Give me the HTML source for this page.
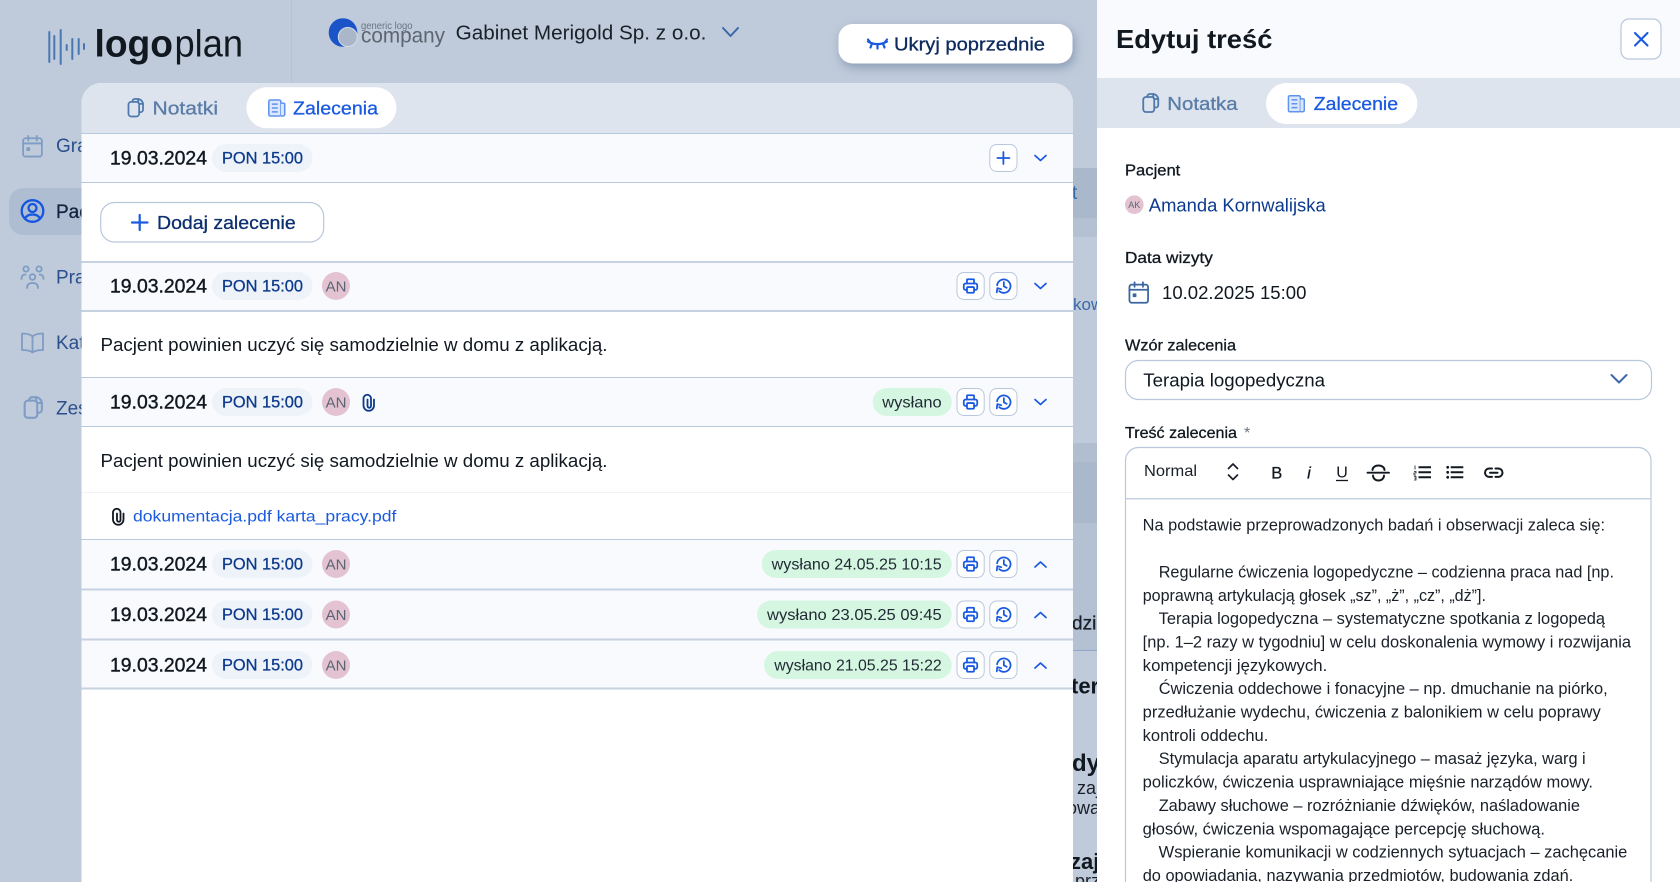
<!DOCTYPE html>
<html lang="pl"><head><meta charset="utf-8"><title>Edytuj treść</title>
<style>
html,body{margin:0;padding:0;width:1680px;height:882px;overflow:hidden;background:#bfcbda}
svg{display:block;font-family:"Liberation Sans",sans-serif}
.m{stroke-width:.3px;stroke:currentColor}
.d{stroke-width:.4px;stroke:#111820}
.ic{fill:none;stroke-linecap:round;stroke-linejoin:round}
</style></head><body>
<svg xmlns="http://www.w3.org/2000/svg" width="1680" height="882" viewBox="0 0 1680 882">
<defs>
<symbol id="copies" viewBox="0 0 17 20"><g class="ic" stroke="currentColor" stroke-width="1.800"><path d="M5 4V3.500A2.500 2.500 0 0 1 7.500 1H10.500c3 0 5.500 2.500 5.500 5.500V12a2.500 2.500 0 0 1-2.500 2.500H12"/><path d="M11 1v2.500A2.500 2.500 0 0 0 13.500 6H16"/><rect x="1" y="4" width="11" height="15" rx="2.800"/></g></symbol>
<symbol id="news" viewBox="0 0 18 18"><rect x=".8" y=".8" width="12.400" height="16.400" rx="1.500" fill="#dbe7fb" stroke="#5f93ec" stroke-width="1.600"/><path d="M13.200 4h2.800a1.200 1.200 0 0 1 1.200 1.200v10.300a1.700 1.700 0 0 1-1.700 1.700h-2.300" fill="#dbe7fb" stroke="#5f93ec" stroke-width="1.600"/><path d="M4 5h6M4 9h6M4 13h6" stroke="#5f93ec" stroke-width="1.600" fill="none"/></symbol>
<symbol id="print" viewBox="0 0 24 24"><g class="ic" stroke="#1a5ae0" stroke-width="2.500"><path d="M7 8.500V3.500a1 1 0 0 1 1-1h8a1 1 0 0 1 1 1v5"/><path d="M7 17.500H5a2.500 2.500 0 0 1-2.500-2.500v-4A2.500 2.500 0 0 1 5 8.500h14a2.500 2.500 0 0 1 2.500 2.500v4a2.500 2.500 0 0 1-2.500 2.500h-2"/><rect x="7" y="13.500" width="10" height="8" rx="1.500"/></g></symbol>
<symbol id="hist" viewBox="0 0 24 24"><g class="ic" stroke="#1a5ae0" stroke-width="2.500"><path d="M3 11a9.500 9.500 0 1 1 3 8.200"/><path d="M2.500 21l.8-6 5.500 1.500"/><path d="M12.500 6.500v6l4 2"/></g></symbol>
<symbol id="cal" viewBox="0 0 22 24"><g class="ic" stroke="currentColor" stroke-width="1.900"><rect x="1" y="3.500" width="20" height="19.500" rx="2.500"/><path d="M1 9h20M6.500 1v5M15.500 1v5"/></g><rect x="4.500" y="13" width="4" height="4" rx=".8" fill="currentColor"/></symbol>
</defs>

<rect width="1680" height="882" fill="#bfcbda"/>
<path d="M291.500 0V83" stroke="#b5c3d5" stroke-width="1"/>

<!-- logo -->
<g stroke="#4878b4" stroke-width="2" stroke-linecap="round"><path d="M49.300 32V62M54.300 36V59M60.700 30V64M66.700 45V50M72.300 39V59M78.700 39V54M84 44V49"/></g>
<text x="94.500" y="56.500" font-size="38" font-weight="700" fill="#111820" textLength="78.500" lengthAdjust="spacingAndGlyphs">logo</text>
<text x="174.500" y="56.500" font-size="38" fill="#111820" textLength="68.500" lengthAdjust="spacingAndGlyphs">plan</text>

<!-- company -->
<circle cx="343" cy="32.500" r="14.300" fill="#1a54c8"/>
<circle cx="347.800" cy="37" r="9.500" fill="#a9b7c8" stroke="#d5dde8" stroke-width="1"/>
<text x="361" y="29" font-size="10.500" fill="#6b7480" textLength="51.500" lengthAdjust="spacingAndGlyphs">generic logo</text>
<text x="361" y="42.500" font-size="21" fill="#5c6570" textLength="84" lengthAdjust="spacingAndGlyphs">company</text>
<text x="455.700" y="39.500" font-size="20.500" fill="#1a2029" textLength="250.700" lengthAdjust="spacingAndGlyphs">Gabinet Merigold Sp. z o.o.</text>
<path d="M723 28l7.500 8 7.500-8" class="ic" stroke="#3a68a8" stroke-width="2"/>

<!-- Ukryj -->
<rect x="838.500" y="24" width="234" height="39.500" rx="14" fill="#fff" style="filter:drop-shadow(2px 4px 5px rgba(95,115,150,.55))"/>
<g class="ic" stroke="#1a5ae0" stroke-width="2.200"><path d="M868 41.500c6 3.500 13 3.500 19 0M868 39.500l2 2.500M887 39.500l-2 2.500M872 43.500l-1.500 4M877.500 44.500v4M883 43.500l1.500 4"/></g>
<text x="894" y="50.500" font-size="18.500" class="m" fill="#0c2a5e" color="#0c2a5e" textLength="151" lengthAdjust="spacingAndGlyphs">Ukryj poprzednie</text>

<!-- sidebar -->
<rect x="9" y="188" width="90" height="47" rx="14" fill="#aebdd1"/>
<use href="#cal" x="22" y="135" width="21" height="22.500" color="#7f9cc4"/>
<text x="56" y="152" font-size="19" fill="#2a4f8c">Grafik</text>
<g class="ic" stroke="#1456e0" stroke-width="2.300"><circle cx="32.500" cy="211" r="10.800"/><circle cx="32.500" cy="208" r="4"/><path d="M25 218.500c1.500-3 4-4 7.500-4s6 1 7.500 4"/></g>
<text x="56" y="218" font-size="19" class="m" fill="#14233f" color="#14233f">Pacjenci</text>
<g class="ic" stroke="#7f9cc4" stroke-width="1.800"><circle cx="26" cy="269" r="2.600"/><circle cx="39" cy="269" r="2.600"/><circle cx="32.500" cy="277" r="2.800"/><path d="M21.500 279c0-3 1.500-4.500 4-4.500M43.500 279c0-3-1.500-4.500-4-4.500M27 288c0-3.500 2-5 5.500-5s5.500 1.500 5.500 5"/></g>
<text x="56" y="283.500" font-size="19" fill="#2a4f8c">Pracownicy</text>
<g class="ic" stroke="#7f9cc4" stroke-width="1.800"><path d="M32.500 336.500c-2.500-2.500-6-3-10.500-3V350c4.500 0 8 .5 10.500 2.500 2.500-2 6-2.500 10.500-2.500v-16.500c-4.500 0-8 .5-10.500 3zM32.500 336.500v16"/></g>
<text x="56" y="349" font-size="19" fill="#2a4f8c">Katalog</text>
<use href="#copies" x="23.500" y="396" width="19.500" height="23" color="#7f9cc4"/>
<text x="56" y="414.500" font-size="19" fill="#2a4f8c">Zestawy</text>

<!-- background content seen in gutter -->
<rect x="1060" y="168" width="40" height="50" fill="#a9b8ca"/>
<rect x="1060" y="218" width="40" height="19" fill="#b4c1d2"/>
<text x="1072" y="199" font-size="19" fill="#3a68a8">t</text>
<text x="1073" y="310" font-size="17" fill="#3a68a8">kow</text>
<rect x="1060" y="443" width="40" height="19" fill="#b1bed0"/>
<rect x="1060" y="462" width="40" height="61" fill="#a9b8ca"/>
<rect x="1060" y="523" width="40" height="127" fill="#b4c1d2"/>
<path d="M1060 650.500H1100" stroke="#8fa8cb" stroke-width="1"/>
<text x="1072" y="629.500" font-size="19" class="m" fill="#1a2029" color="#1a2029">dzi</text>
<text x="1071" y="693.500" font-size="22" font-weight="700" fill="#111820">ter</text>
<text x="1072" y="771" font-size="24" font-weight="700" fill="#111820">dy</text>
<text x="1077" y="794" font-size="18" fill="#1a2029">zaj</text>
<text x="1067" y="814" font-size="18" fill="#1a2029">owa</text>
<text x="1070" y="869" font-size="22" font-weight="700" fill="#111820">zaj</text>
<text x="1075" y="887" font-size="18" fill="#1a2029">prz</text>

<!-- main panel -->
<path d="M81.500 882V103a20 20 0 0 1 20-20H1053a20 20 0 0 1 20 20V882z" fill="#fff"/>
<path d="M81.500 134V103a20 20 0 0 1 20-20H1053a20 20 0 0 1 20 20V134z" fill="#dde4ed"/>
<!-- tabs -->
<use href="#copies" x="127.500" y="98" width="16.500" height="19.500" color="#4f78ad"/>
<text x="152.500" y="114.500" font-size="18" class="m" fill="#5a7ca8" color="#5a7ca8" textLength="65.500" lengthAdjust="spacingAndGlyphs">Notatki</text>
<rect x="246.400" y="87.300" width="150" height="41" rx="20.500" fill="#fff"/>
<use href="#news" x="268" y="99" width="17.500" height="18"/>
<text x="293" y="114.500" font-size="18" class="m" fill="#1a5ae0" color="#1a5ae0" textLength="85" lengthAdjust="spacingAndGlyphs">Zalecenia</text>

<!-- row header backgrounds -->
<g fill="#f9fafd">
<rect x="81.500" y="134" width="991.500" height="48"/>
<rect x="81.500" y="262" width="991.500" height="49"/>
<rect x="81.500" y="378" width="991.500" height="48"/>
<rect x="81.500" y="540" width="991.500" height="49"/>
<rect x="81.500" y="590" width="991.500" height="49"/>
<rect x="81.500" y="640" width="991.500" height="48"/>
</g>
<g stroke="#b8c8dd" stroke-width="1"><path d="M81.500 133.500H1073M81.500 182.500H1073M81.500 377.500H1073M81.500 426.500H1073M81.500 539.500H1073"/></g>
<g stroke="#c6d2e2" stroke-width="2"><path d="M81.500 262H1073M81.500 311H1073M81.500 589.500H1073M81.500 639.500H1073M81.500 688.500H1073"/></g>
<path d="M81.500 492.500H1073" stroke="#f0f3f7" stroke-width="1"/>

<!-- row 1 -->
<text x="110" y="164.500" font-size="19.500" class="d" fill="#111820" textLength="97" lengthAdjust="spacingAndGlyphs">19.03.2024</text>
<rect x="212" y="144" width="100.500" height="28" rx="14" fill="#eef3fa"/>
<text x="222" y="163.500" font-size="16.500" class="m" fill="#0d3a8c" color="#0d3a8c" textLength="81" lengthAdjust="spacingAndGlyphs">PON 15:00</text>
<rect x="989.800" y="144.500" width="27.200" height="27" rx="7" fill="#fff" stroke="#b9c7dc"/>
<path d="M1003.400 152v12M997.400 158h12" class="ic" stroke="#1a5ae0" stroke-width="1.800"/>
<path d="M1035 155.500l5.500 5 5.500-5" class="ic" stroke="#1a5ae0" stroke-width="1.700"/>

<!-- add button -->
<rect x="100.700" y="202.500" width="223" height="39.500" rx="14" fill="#fff" stroke="#b9c7dc" stroke-width="1.200"/>
<path d="M139.700 215v15M132 222.500h15.500" class="ic" stroke="#1a5ae0" stroke-width="2.200"/>
<text x="157" y="229" font-size="18.500" class="m" fill="#0c2f6e" color="#0c2f6e" textLength="138.700" lengthAdjust="spacingAndGlyphs">Dodaj zalecenie</text>

<!-- row 2 -->
<text x="110" y="292.500" font-size="19.500" class="d" fill="#111820" textLength="97" lengthAdjust="spacingAndGlyphs">19.03.2024</text>
<rect x="212" y="272" width="100.500" height="28" rx="14" fill="#eef3fa"/>
<text x="222" y="291.500" font-size="16.500" class="m" fill="#0d3a8c" color="#0d3a8c" textLength="81" lengthAdjust="spacingAndGlyphs">PON 15:00</text>
<circle cx="336" cy="286" r="14" fill="#e3c3d1"/><text x="336" y="291.500" font-size="15" fill="#5b6472" text-anchor="middle">AN</text>
<rect x="957" y="272.500" width="27.200" height="27" rx="7" fill="#fff" stroke="#b9c7dc"/><use href="#print" x="962" y="277.500" width="17" height="17"/>
<rect x="989.800" y="272.500" width="27.200" height="27" rx="7" fill="#fff" stroke="#b9c7dc"/><use href="#hist" x="995" y="277.500" width="17" height="17"/>
<path d="M1035 283.500l5.500 5 5.500-5" class="ic" stroke="#1a5ae0" stroke-width="1.700"/>
<text x="100.500" y="351" font-size="18" fill="#111820" textLength="507" lengthAdjust="spacingAndGlyphs">Pacjent powinien uczyć się samodzielnie w domu z aplikacją.</text>

<!-- row 3 -->
<text x="110" y="408.500" font-size="19.500" class="d" fill="#111820" textLength="97" lengthAdjust="spacingAndGlyphs">19.03.2024</text>
<rect x="212" y="388" width="100.500" height="28" rx="14" fill="#eef3fa"/>
<text x="222" y="407.500" font-size="16.500" class="m" fill="#0d3a8c" color="#0d3a8c" textLength="81" lengthAdjust="spacingAndGlyphs">PON 15:00</text>
<circle cx="336" cy="402" r="14" fill="#e3c3d1"/><text x="336" y="407.500" font-size="15" fill="#5b6472" text-anchor="middle">AN</text>
<path d="M367.500 399.500v6.500a1.750 1.750 0 0 0 3.500 0V398.500a3.750 3.750 0 0 0-7.500 0v7a5.250 5.250 0 0 0 10.500 0v-6" class="ic" stroke="#0c3a8c" stroke-width="1.800"/>
<rect x="872.700" y="388" width="79" height="28" rx="14" fill="#d5f7e1"/>
<text x="882.300" y="407.500" font-size="16" fill="#222a35" textLength="59.400" lengthAdjust="spacingAndGlyphs">wysłano</text>
<rect x="957" y="388.500" width="27.200" height="27" rx="7" fill="#fff" stroke="#b9c7dc"/><use href="#print" x="962" y="393.500" width="17" height="17"/>
<rect x="989.800" y="388.500" width="27.200" height="27" rx="7" fill="#fff" stroke="#b9c7dc"/><use href="#hist" x="995" y="393.500" width="17" height="17"/>
<path d="M1035 399.500l5.500 5 5.500-5" class="ic" stroke="#1a5ae0" stroke-width="1.700"/>
<text x="100.500" y="467" font-size="18" fill="#111820" textLength="507" lengthAdjust="spacingAndGlyphs">Pacjent powinien uczyć się samodzielnie w domu z aplikacją.</text>
<path d="M117 513.500v6.500a1.750 1.750 0 0 0 3.500 0V512.500a3.750 3.750 0 0 0-7.500 0v7a5.250 5.250 0 0 0 10.500 0v-6" class="ic" stroke="#111820" stroke-width="1.800"/>
<text x="133" y="521.500" font-size="16" fill="#1a5ae0" textLength="263.400" lengthAdjust="spacingAndGlyphs">dokumentacja.pdf karta_pracy.pdf</text>

<!-- row 4 -->
<text x="110" y="570.300" font-size="19.500" class="d" fill="#111820" textLength="97" lengthAdjust="spacingAndGlyphs">19.03.2024</text>
<rect x="212" y="550" width="100.500" height="28" rx="14" fill="#eef3fa"/>
<text x="222" y="569.500" font-size="16.500" class="m" fill="#0d3a8c" color="#0d3a8c" textLength="81" lengthAdjust="spacingAndGlyphs">PON 15:00</text>
<circle cx="336" cy="564" r="14" fill="#e3c3d1"/><text x="336" y="569.500" font-size="15" fill="#5b6472" text-anchor="middle">AN</text>
<rect x="761.700" y="550" width="190" height="28" rx="14" fill="#d5f7e1"/>
<text x="771.700" y="569.500" font-size="16" fill="#222a35" textLength="170" lengthAdjust="spacingAndGlyphs">wysłano 24.05.25 10:15</text>
<rect x="957" y="550.500" width="27.200" height="27" rx="7" fill="#fff" stroke="#b9c7dc"/><use href="#print" x="962" y="555.500" width="17" height="17"/>
<rect x="989.800" y="550.500" width="27.200" height="27" rx="7" fill="#fff" stroke="#b9c7dc"/><use href="#hist" x="995" y="555.500" width="17" height="17"/>
<path d="M1035 567l5.500-5 5.500 5" class="ic" stroke="#1a5ae0" stroke-width="1.700"/>

<!-- row 5 -->
<text x="110" y="620.800" font-size="19.500" class="d" fill="#111820" textLength="97" lengthAdjust="spacingAndGlyphs">19.03.2024</text>
<rect x="212" y="600.500" width="100.500" height="28" rx="14" fill="#eef3fa"/>
<text x="222" y="620" font-size="16.500" class="m" fill="#0d3a8c" color="#0d3a8c" textLength="81" lengthAdjust="spacingAndGlyphs">PON 15:00</text>
<circle cx="336" cy="614.500" r="14" fill="#e3c3d1"/><text x="336" y="620" font-size="15" fill="#5b6472" text-anchor="middle">AN</text>
<rect x="757" y="600.500" width="194.700" height="28" rx="14" fill="#d5f7e1"/>
<text x="767" y="620" font-size="16" fill="#222a35" textLength="174.700" lengthAdjust="spacingAndGlyphs">wysłano 23.05.25 09:45</text>
<rect x="957" y="601" width="27.200" height="27" rx="7" fill="#fff" stroke="#b9c7dc"/><use href="#print" x="962" y="606" width="17" height="17"/>
<rect x="989.800" y="601" width="27.200" height="27" rx="7" fill="#fff" stroke="#b9c7dc"/><use href="#hist" x="995" y="606" width="17" height="17"/>
<path d="M1035 617.500l5.500-5 5.500 5" class="ic" stroke="#1a5ae0" stroke-width="1.700"/>

<!-- row 6 -->
<text x="110" y="671.300" font-size="19.500" class="d" fill="#111820" textLength="97" lengthAdjust="spacingAndGlyphs">19.03.2024</text>
<rect x="212" y="651" width="100.500" height="28" rx="14" fill="#eef3fa"/>
<text x="222" y="670.500" font-size="16.500" class="m" fill="#0d3a8c" color="#0d3a8c" textLength="81" lengthAdjust="spacingAndGlyphs">PON 15:00</text>
<circle cx="336" cy="665" r="14" fill="#e3c3d1"/><text x="336" y="670.500" font-size="15" fill="#5b6472" text-anchor="middle">AN</text>
<rect x="764" y="651" width="187.700" height="28" rx="14" fill="#d5f7e1"/>
<text x="774.300" y="670.500" font-size="16" fill="#222a35" textLength="167.400" lengthAdjust="spacingAndGlyphs">wysłano 21.05.25 15:22</text>
<rect x="957" y="651.500" width="27.200" height="27" rx="7" fill="#fff" stroke="#b9c7dc"/><use href="#print" x="962" y="656.500" width="17" height="17"/>
<rect x="989.800" y="651.500" width="27.200" height="27" rx="7" fill="#fff" stroke="#b9c7dc"/><use href="#hist" x="995" y="656.500" width="17" height="17"/>
<path d="M1035 668l5.500-5 5.500 5" class="ic" stroke="#1a5ae0" stroke-width="1.700"/>

<!-- right panel -->
<rect x="1097" y="0" width="583" height="882" fill="#fff"/>
<rect x="1097" y="0" width="583" height="78" fill="#f9fafd"/>
<rect x="1097" y="78" width="583" height="50" fill="#dde4ed"/>
<text x="1116" y="48" font-size="26" font-weight="700" fill="#111820" textLength="156.400" lengthAdjust="spacingAndGlyphs">Edytuj treść</text>
<rect x="1621" y="19" width="40" height="40" rx="8" fill="#fff" stroke="#b9c7dc" stroke-width="1.200"/>
<path d="M1635 33l12.500 12.500M1647.500 33l-12.500 12.500" class="ic" stroke="#1a5ae0" stroke-width="2.100"/>
<use href="#copies" x="1142" y="93" width="17.500" height="20" color="#4f78ad"/>
<text x="1167.300" y="109.800" font-size="18" class="m" fill="#5a7ca8" color="#5a7ca8" textLength="70.300" lengthAdjust="spacingAndGlyphs">Notatka</text>
<rect x="1266" y="83" width="151.400" height="41" rx="20.500" fill="#fff"/>
<use href="#news" x="1287.600" y="95" width="17.500" height="17.500"/>
<text x="1313.800" y="109.800" font-size="18" class="m" fill="#1a5ae0" color="#1a5ae0" textLength="84.200" lengthAdjust="spacingAndGlyphs">Zalecenie</text>

<text x="1125" y="175.500" font-size="16" class="m" fill="#111820" color="#111820" textLength="55.300" lengthAdjust="spacingAndGlyphs">Pacjent</text>
<circle cx="1134.300" cy="204.700" r="9.300" fill="#e3c3d1"/><text x="1134.300" y="208" font-size="9" fill="#5b6472" text-anchor="middle">AK</text>
<text x="1148.800" y="211.300" font-size="18" fill="#0c3a8f" textLength="176.900" lengthAdjust="spacingAndGlyphs">Amanda Kornwalijska</text>

<text x="1125" y="263" font-size="16" class="m" fill="#111820" color="#111820" textLength="87.800" lengthAdjust="spacingAndGlyphs">Data wizyty</text>
<use href="#cal" x="1128.500" y="281" width="20.500" height="23" color="#3d66a0"/>
<text x="1162" y="298.800" font-size="18" fill="#111820" textLength="144.400" lengthAdjust="spacingAndGlyphs">10.02.2025 15:00</text>

<text x="1125" y="350.700" font-size="16" class="m" fill="#111820" color="#111820" textLength="111" lengthAdjust="spacingAndGlyphs">Wzór zalecenia</text>
<rect x="1125.500" y="360.500" width="526" height="39" rx="13" fill="#fff" stroke="#b9c7dc" stroke-width="1.200"/>
<text x="1143.300" y="386.300" font-size="18" fill="#111820" textLength="181.700" lengthAdjust="spacingAndGlyphs">Terapia logopedyczna</text>
<path d="M1611.500 375l7.500 7.500 7.500-7.500" class="ic" stroke="#3a68a8" stroke-width="2"/>

<text x="1125" y="438" font-size="16" class="m" fill="#111820" color="#111820" textLength="112" lengthAdjust="spacingAndGlyphs">Treść zalecenia</text>
<text x="1244" y="438" font-size="16" fill="#6b7480">*</text>

<path d="M1125.500 882V460.500a13 13 0 0 1 13-13H1638a13 13 0 0 1 13 13V882" fill="#fff" stroke="#b9c7dc" stroke-width="1.200"/>
<path d="M1125.500 498.700H1651" stroke="#c6d2e2" stroke-width="1.500"/>
<text x="1144" y="476" font-size="16" fill="#1a2029" textLength="53" lengthAdjust="spacingAndGlyphs">Normal</text>
<path d="M1228.500 468.500l4.500-4.500 4.500 4.500M1228.500 475l4.500 4.500 4.500-4.500" class="ic" stroke="#1a2029" stroke-width="1.700"/>
<text x="1276.700" y="478.500" font-size="16.500" fill="#111820" text-anchor="middle" class="m" color="#111820">B</text>
<text x="1309" y="478.500" font-size="16.500" fill="#111820" text-anchor="middle" font-style="italic" class="m" color="#111820">i</text>
<text x="1342" y="477.500" font-size="16" fill="#111820" text-anchor="middle">U</text>
<path d="M1336 480.500h12" stroke="#111820" stroke-width="1.300"/>
<g class="ic" stroke="#111820" stroke-width="1.900"><path d="M1367.500 472.700h21.500M1384.500 470c0-2.500-2.500-4.500-6-4.500s-6 2-6 4.500M1373 475.500c0 3 2.500 5 5.500 5s5.500-2 5.500-5"/></g>
<g stroke="#111820" stroke-width="2"><path d="M1418.500 467.300h12.500M1418.500 472.300h12.500M1418.500 477.300h12.500M1450.700 467.300h12.600M1450.700 472.300h12.600M1450.700 477.300h12.600"/></g>
<path d="M1415 465.500v4M1414 471.500h2v1.500h-2v2h2M1414 476.500h2v1.700h-1.500M1416 478.200v1.800h-2" fill="none" stroke="#111820" stroke-width=".8"/>
<g fill="#111820"><circle cx="1447.700" cy="467.300" r="1.400"/><circle cx="1447.700" cy="472.300" r="1.400"/><circle cx="1447.700" cy="477.300" r="1.400"/></g>
<g class="ic" stroke="#111820" stroke-width="2"><path d="M1492 468.500h-2.800a4.200 4.200 0 0 0 0 8.400h2.800M1495.500 468.500h2.800a4.200 4.200 0 0 1 0 8.400h-2.800M1490 472.700h7.500"/></g>

<g font-size="16.300" fill="#1a2029">
<text x="1142.700" y="530.700" textLength="462.300" lengthAdjust="spacingAndGlyphs">Na podstawie przeprowadzonych badań i obserwacji zaleca się:</text>
<text x="1158.700" y="577.400" textLength="455.300" lengthAdjust="spacingAndGlyphs">Regularne ćwiczenia logopedyczne – codzienna praca nad [np.</text>
<text x="1142.700" y="600.800" textLength="343.300" lengthAdjust="spacingAndGlyphs">poprawną artykulacją głosek „sz”, „ż”, „cz”, „dż”].</text>
<text x="1158.700" y="624.100" textLength="446.300" lengthAdjust="spacingAndGlyphs">Terapia logopedyczna – systematyczne spotkania z logopedą</text>
<text x="1142.700" y="647.500" textLength="488.300" lengthAdjust="spacingAndGlyphs">[np. 1–2 razy w tygodniu] w celu doskonalenia wymowy i rozwijania</text>
<text x="1142.700" y="670.800" textLength="184.600" lengthAdjust="spacingAndGlyphs">kompetencji językowych.</text>
<text x="1158.700" y="694.200" textLength="449" lengthAdjust="spacingAndGlyphs">Ćwiczenia oddechowe i fonacyjne – np. dmuchanie na piórko,</text>
<text x="1142.700" y="717.500" textLength="458" lengthAdjust="spacingAndGlyphs">przedłużanie wydechu, ćwiczenia z balonikiem w celu poprawy</text>
<text x="1142.700" y="740.900" textLength="125.600" lengthAdjust="spacingAndGlyphs">kontroli oddechu.</text>
<text x="1158.700" y="764.200" textLength="427" lengthAdjust="spacingAndGlyphs">Stymulacja aparatu artykulacyjnego – masaż języka, warg i</text>
<text x="1142.700" y="787.600" textLength="450.300" lengthAdjust="spacingAndGlyphs">policzków, ćwiczenia usprawniające mięśnie narządów mowy.</text>
<text x="1158.700" y="810.900" textLength="421.300" lengthAdjust="spacingAndGlyphs">Zabawy słuchowe – rozróżnianie dźwięków, naśladowanie</text>
<text x="1142.700" y="834.300" textLength="402.300" lengthAdjust="spacingAndGlyphs">głosów, ćwiczenia wspomagające percepcję słuchową.</text>
<text x="1158.700" y="857.600" textLength="468.600" lengthAdjust="spacingAndGlyphs">Wspieranie komunikacji w codziennych sytuacjach – zachęcanie</text>
<text x="1142.700" y="881" textLength="430.600" lengthAdjust="spacingAndGlyphs">do opowiadania, nazywania przedmiotów, budowania zdań.</text>
</g>
</svg>
</body></html>
